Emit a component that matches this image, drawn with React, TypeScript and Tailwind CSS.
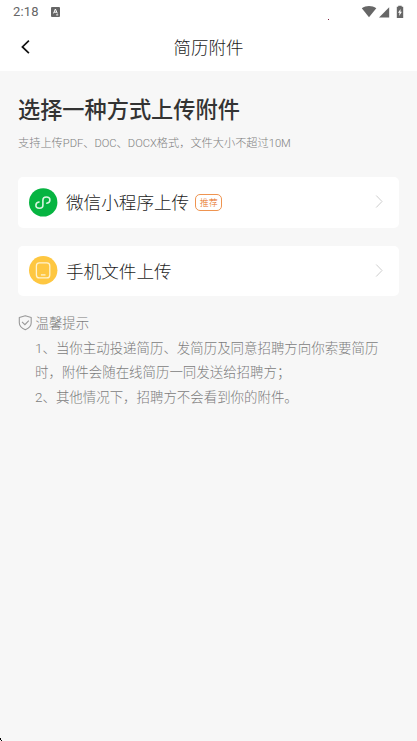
import type { ReactNode } from 'react';

interface UploadOption {
  id: string;
  label: string;
  badge?: string;
  icon: ReactNode;
}

function MiniProgramIcon() {
  return (
    <svg className="size-[29px]" viewBox="0 0 29 29" fill="none">
      <circle cx="14.2" cy="14.4" r="14.2" fill="#06b441" />
      <path
        d="M10 14C8.2 14.3 6.9 15.6 6.9 17.2C6.9 19 8.5 20.2 10.4 20.2C12.4 20.2 13.9 18.9 13.9 17.2V12C13.9 10.2 15.4 9 17.3 9C19.3 9 20.9 10.2 20.9 11.9C20.9 13.5 19.6 14.9 17.8 15.2"
        stroke="#d9f5e1"
        strokeWidth="1.6"
        strokeLinecap="round"
      />
    </svg>
  );
}

function PhoneFileIcon() {
  return (
    <svg className="size-[29px]" viewBox="0 0 29 29" fill="none">
      <circle cx="14.2" cy="14.2" r="14.2" fill="#fec741" />
      <rect x="7.4" y="6.9" width="13.4" height="15" rx="3" stroke="#fff3cf" strokeWidth="1.3" />
      <path d="M11.9 18.9H16.5" stroke="#fff3cf" strokeWidth="1.3" />
    </svg>
  );
}

const OPTIONS: UploadOption[] = [
  { id: 'wechat', label: '微信小程序上传', badge: '推荐', icon: <MiniProgramIcon /> },
  { id: 'phone', label: '手机文件上传', icon: <PhoneFileIcon /> },
];

function StatusBar() {
  return (
    <div className="flex h-[23px] items-center justify-between pl-[13px] pr-3 text-[#666]">
      <div className="flex items-center">
        <span className="w-[26px] font-[Roboto,sans-serif] text-[13px] leading-none tracking-[0.2px]">2:18</span>
        <svg className="ml-3 h-2.5 w-[9px]" viewBox="0 0 9 10">
          <rect width="9" height="10" rx="1" fill="currentColor" />
          <path d="M2.5 6.4L4.4 2L6.3 6.4M3.2 5.2H5.6M5.2 7.9H7.2" fill="none" stroke="#fff" />
        </svg>
      </div>
      <svg className="h-3.5 w-11" viewBox="0 0 44 14" fill="currentColor">
        <path d="M0.8 3.2C5 0.2 11 0.2 15.3 3.2L8 12.2Z" />
        <path d="M18 12.5L28.2 2.2V12.5Z" />
        <path d="M35.8 1.8H37.2V0.8H40.7V1.8H42.2V13H35.8Z" />
        <path d="M39.6 3.9L37 7.8H38.5L38.2 10.9L40.9 6.7H39.4Z" fill="#fff" />
      </svg>
    </div>
  );
}

function OptionCard({ option }: { option: UploadOption }) {
  return (
    <button className="flex h-[50.5px] w-full items-center rounded-[5px] bg-white pl-[10.5px] pr-3.5">
      {option.icon}
      <span className="ml-[8.5px] text-[17.6px] font-light leading-6 text-[#1c1c1c]">{option.label}</span>
      {option.badge && (
        <span className="ml-[6px] flex h-[17px] w-[27px] items-center justify-center rounded-[5px] border border-[#ef9450] pt-px text-[9px] font-light leading-none text-[#e66c14]">
          {option.badge}
        </span>
      )}
      <svg className="ml-auto h-3.5 w-3" viewBox="0 0 12 14" fill="none" stroke="#cdcdcd">
        <path d="M3.2 0.5L9 6.5L3.2 12.5" />
      </svg>
    </button>
  );
}

export default function App() {
  return (
    <div className="relative min-h-screen bg-[#f7f7f7] font-['Noto_Sans_CJK_SC',sans-serif]">
      <header className="h-[71px] bg-white">
        <StatusBar />
        <div className="grid h-[47px] grid-cols-[48px_1fr_48px] items-center">
          <button className="pl-5" aria-label="返回">
            <svg className="h-4 w-3" viewBox="0 0 12 16" fill="none" stroke="#111" strokeWidth="1.7">
              <path d="M8.9 1.6L2.4 7.9L8.9 14.2" />
            </svg>
          </button>
          <h1 className="text-center text-[17.5px] font-light leading-6 text-[#1c1c1c]">简历附件</h1>
        </div>
      </header>

      <main className="px-[18px] pt-[21px]">
        <h2 className="text-[22.2px] font-medium leading-8 text-[#333]">选择一种方式上传附件</h2>
        <p className="mt-[9.5px] font-[Roboto,'Noto_Sans_CJK_SC',sans-serif] text-[11.2px] font-light leading-5 text-[#808080]">
          支持上传PDF、DOC、DOCX格式，文件大小不超过10M
        </p>

        <div className="mt-[23.5px] flex flex-col gap-[18px]">
          {OPTIONS.map((option) => (
            <OptionCard key={option.id} option={option} />
          ))}
        </div>

        {/* Tips */}
        <section className="mt-[16.5px] text-[13.4px] font-light text-[#7c7c7c]">
          <div className="flex h-5 items-center">
            <svg className="h-4 w-3.5" viewBox="0 0 14 16" fill="none" stroke="#999" strokeWidth="1.1">
              <path d="M7.3 0.7L13.2 2.5V7.7C13.2 11 10.8 13.2 7.3 14.7C3.8 13.2 1.3 11 1.3 7.7V2.5Z" strokeLinejoin="round" />
              <path d="M4 6.9L6.9 9.7L10.8 5.7" />
            </svg>
            <span className="ml-[3.5px]">温馨提示</span>
          </div>
          <div className="ml-[17px] mt-1 font-[Roboto,'Noto_Sans_CJK_SC',sans-serif] text-[13.45px] leading-[24.6px]">
            <p>1、当你主动投递简历、发简历及同意招聘方向你索要简历时，附件会随在线简历一同发送给招聘方；</p>
            <p>2、其他情况下，招聘方不会看到你的附件。</p>
          </div>
        </section>
      </main>

      {/* Stray pixels over the screen */}
      <span className="absolute left-[328px] top-[19px] size-px bg-[#802040]" />
      <span className="absolute bottom-px left-0 h-0.5 w-px bg-black" />
      <span className="absolute bottom-0 left-px size-px bg-black" />
    </div>
  );
}
